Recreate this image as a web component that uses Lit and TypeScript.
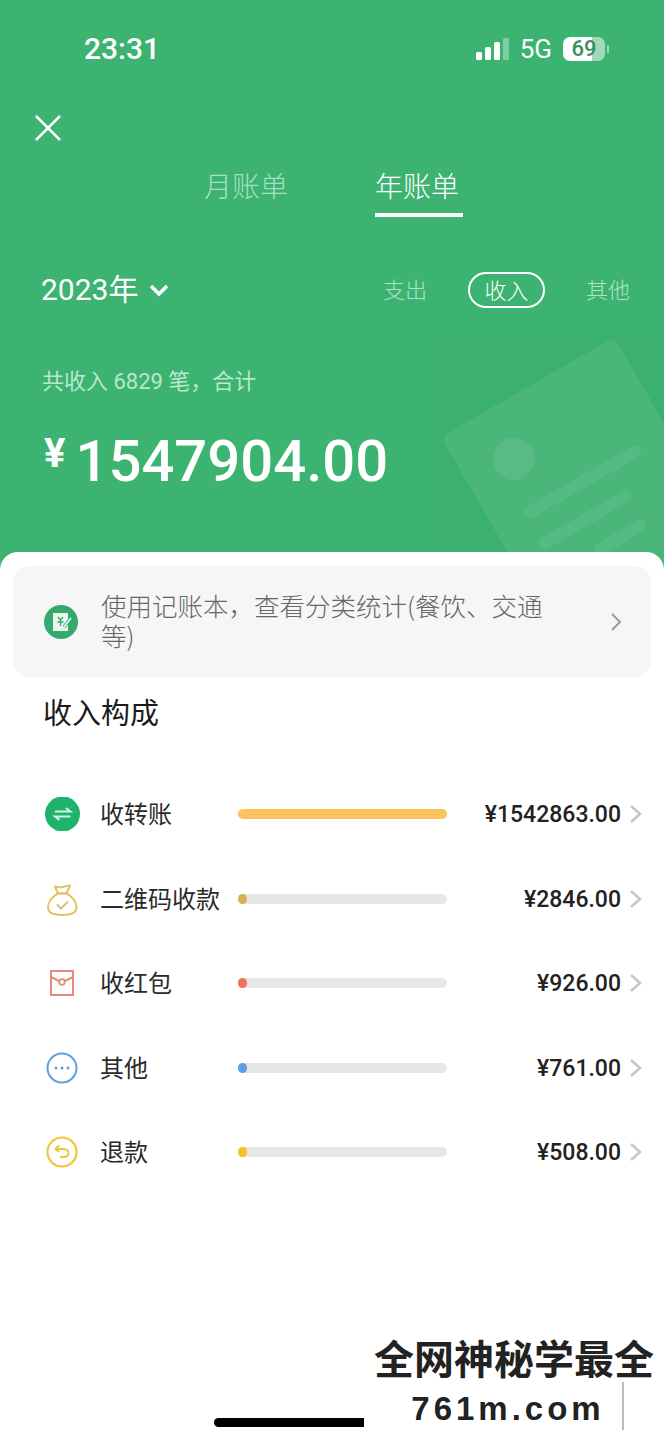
import { LitElement, html, css, svg } from 'lit';
import { customElement } from 'lit/decorators.js';

const rows = [
  { key: 'transfer', label: '收转账', amount: '¥1542863.00', fill: 100, color: '#fcc25e' },
  { key: 'qr', label: '二维码收款', amount: '¥2846.00', fill: 4.5, color: '#d3b24f' },
  { key: 'packet', label: '收红包', amount: '¥926.00', fill: 4.5, color: '#f0705c' },
  { key: 'other', label: '其他', amount: '¥761.00', fill: 4.5, color: '#5a9fe8' },
  { key: 'refund', label: '退款', amount: '¥508.00', fill: 4.5, color: '#f6c31c' },
];

const icons: Record<string, unknown> = {
  transfer: svg`<circle cx="17.500" cy="17" r="17.500" fill="#1db36a"/>
    <path d="M10 14.500h15.500l-4.500-3.500M25.500 19.500H10l4.500 3.500" fill="none" stroke="#d8f3e4" stroke-width="2"/>`,
  qr: svg`<path d="M13 11.500L10 4.500c3 .5 5 1.500 8 .5 2.500-.8 5-1.500 7-1.500l-3.500 8z" fill="none" stroke="#e2c160" stroke-width="2" stroke-linejoin="round"/>
    <path d="M13 11.500C7 14.500 3 20 3 25.500c0 5 4.500 7.500 14.500 7.500s14-2.500 14-7.500c0-5.500-4-11-10-14z" fill="none" stroke="#e2c160" stroke-width="2"/>
    <path d="M12 22.500l4 4 7-7" fill="none" stroke="#d8c07a" stroke-width="2"/>`,
  packet: svg`<rect x="6" y="5" width="22" height="24" fill="none" stroke="#e88a78" stroke-width="2"/>
    <path d="M6 11l11 5.500L28 11" fill="none" stroke="#e88a78" stroke-width="2"/>
    <circle cx="17" cy="16" r="2.800" fill="#fff" stroke="#e88a78" stroke-width="1.700"/>`,
  other: svg`<circle cx="17" cy="17" r="14.500" fill="none" stroke="#619fdc" stroke-width="2"/>
    <circle cx="11" cy="17" r="1.500" fill="#619fdc"/><circle cx="17" cy="17" r="1.500" fill="#619fdc"/><circle cx="23" cy="17" r="1.500" fill="#619fdc"/>`,
  refund: svg`<circle cx="17" cy="17" r="14.500" fill="none" stroke="#eec735" stroke-width="2.200"/>
    <path d="M14 10.500l-3.500 3.500 3.500 3M11 14h8c3 0 4.500 2 4.500 4s-1.500 4-4.500 4h-4" fill="none" stroke="#eec735" stroke-width="2"/>`,
};

const bannerChevron = html`<svg class="chev" viewBox="0 0 12 20"><path d="M2 2l8 8-8 8" fill="none" stroke="#999" stroke-width="2"/></svg>`;
const rowChevron = html`<svg class="chev" viewBox="0 0 13 20"><path d="M2 2l9 8-9 8" fill="none" stroke="#c6c6c6" stroke-width="2.500"/></svg>`;

@customElement('app-root')
export class AppRoot extends LitElement {
  static styles = css`
    :host {
      display: block;
      position: relative;
      width: 664px;
      height: 1440px;
      overflow: hidden;
      background: #fff;
      font-family: 'Noto Sans CJK SC', 'Noto Sans', sans-serif;
      color: #222;
    }
    .hero {
      position: relative;
      height: 570px;
      box-sizing: border-box;
      background: #3cb371;
      color: #fff;
      overflow: hidden;
      padding-top: 29px;
    }
    .deco {
      position: absolute;
      left: 430px;
      top: 330px;
      width: 234px;
      height: 240px;
    }
    .status {
      display: flex;
      justify-content: space-between;
      align-items: center;
      height: 40px;
      padding: 0 59px 0 84px;
    }
    .time {
      font: 500 30px/40px Roboto, sans-serif;
    }
    .status-right {
      display: flex;
      align-items: center;
    }
    .signal {
      width: 33px;
      height: 22px;
      margin-right: 11px;
    }
    .net {
      font: 400 26px/40px Roboto, sans-serif;
      margin-right: 11px;
    }
    .battery {
      position: relative;
      width: 42px;
      height: 24px;
      border-radius: 7px;
      text-align: center;
      background: linear-gradient(90deg, #fff 70%, #a3d8b8 70%);
      color: #3a8f62;
      font: 500 22px/24px Roboto, sans-serif;
    }
    .battery::after {
      content: '';
      position: absolute;
      left: 44px;
      top: 8px;
      width: 2px;
      height: 8px;
      border-radius: 1px;
      background: #a3d8b8;
    }
    .close {
      display: block;
      width: 28px;
      height: 28px;
      margin: 45px 0 0 34px;
    }
    .tabs {
      display: flex;
      gap: 87px;
      margin: 21px 0 0 204px;
      height: 58px;
    }
    .tab {
      position: relative;
      font-size: 28px;
      line-height: 44px;
      font-weight: 300;
      color: #a9dfbf;
    }
    .tab.on {
      color: #fff;
      border-bottom: 4px solid #fff;
      height: 54px;
      line-height: 44px;
      box-sizing: border-box;
      padding-right: 4px;
    }
    .filter {
      display: flex;
      align-items: center;
      height: 40px;
      margin-top: 49px;
      padding: 0 34px 0 41px;
    }
    .year {
      font: 400 30px/40px 'Roboto', 'Noto Sans CJK SC', sans-serif;
    }
    .caret {
      width: 20px;
      height: 14px;
      margin: 0 auto 0 11px;
    }
    .seg {
      font-size: 22px;
      font-weight: 300;
      line-height: 32px;
      padding-bottom: 4px;
      color: #b0e3c4;
    }
    .seg.on {
      box-sizing: border-box;
      width: 77px;
      height: 36px;
      margin: 0 41px;
      padding-bottom: 0;
      line-height: 30px;
      border: 2px solid #fff;
      border-radius: 18px;
      text-align: center;
      color: #fff;
    }
    .sum {
      margin: 56px 0 0 42px;
      font: 400 22px/32px Roboto, 'Noto Sans CJK SC', sans-serif;
      color: #b9e8cb;
    }
    .total {
      display: flex;
      align-items: flex-start;
      margin: 29px 0 0 44px;
      font: 500 58px/68px Roboto, sans-serif;
    }
    .total .cur {
      font-size: 40px;
      line-height: 50px;
      font-weight: 700;
      margin: 2px 10px 0 0;
    }
    .sheet {
      position: relative;
      margin-top: -18px;
      height: 888px;
      border-radius: 18px 18px 0 0;
      background: #fff;
      padding: 14px 13px 0;
      box-sizing: border-box;
    }
    .banner {
      display: flex;
      align-items: center;
      height: 111px;
      box-sizing: border-box;
      padding: 0 29px 0 31px;
      border-radius: 16px;
      background: #f6f6f6;
    }
    .banner-icon {
      width: 34px;
      height: 34px;
      flex: none;
    }
    .banner-text {
      flex: 1;
      margin: 0 52px 0 23px;
      padding-bottom: 3px;
      font-size: 25.500px;
      line-height: 30px;
      font-weight: 300;
      color: #666;
    }
    .banner .chev {
      width: 12px;
      height: 20px;
    }
    h2 {
      margin: 12px 0 0 30px;
      font-size: 29px;
      line-height: 44px;
      font-weight: 400;
      color: #1c1c1c;
    }
    .list {
      margin-top: 39px;
      padding: 0 9px 0 32px;
    }
    .row {
      display: flex;
      align-items: center;
      height: 84.500px;
    }
    .row-icon {
      width: 35px;
      height: 34px;
      flex: none;
    }
    .label {
      width: 138px;
      margin-left: 20px;
      padding-bottom: 3px;
      font-size: 24px;
      font-weight: 400;
      color: #2a2a2a;
      white-space: nowrap;
    }
    .track {
      width: 209px;
      height: 10px;
      flex: none;
      border-radius: 5px;
      background: #e7e7e7;
    }
    .fill {
      height: 100%;
      border-radius: 5px;
    }
    .amount {
      flex: 1;
      text-align: right;
      font: 500 23px/30px Roboto, sans-serif;
      color: #222;
      padding-top: 2px;
    }
    .row .chev {
      width: 13px;
      height: 20px;
      margin-left: 8px;
    }
    .home {
      position: absolute;
      left: 214px;
      bottom: 13px;
      width: 170px;
      height: 9px;
      border-radius: 5px;
      background: #000;
    }
    .mark {
      position: absolute;
      right: 0;
      bottom: 0;
      width: 300px;
      height: 106px;
      background: #fff;
      text-align: center;
      color: #222;
      font-family: 'Liberation Sans', 'Noto Sans CJK SC', sans-serif;
      font-weight: 700;
    }
    .mark-cn {
      font-size: 40px;
      line-height: 50px;
      margin-top: 1px;
      white-space: nowrap;
    }
    .mark-url {
      margin-top: 2px;
      font-size: 33px;
      line-height: 44px;
      letter-spacing: 4px;
      padding-right: 12px;
    }
    .mark-line {
      position: absolute;
      left: 258px;
      top: 48px;
      width: 2px;
      height: 48px;
      background: #bbb;
    }
  `;

  render() {
    return html`
      <div class="hero">
        <svg class="deco" viewBox="0 0 234 240">
          <rect x="10" y="5" width="224" height="235" fill="#000" fill-opacity=".012" />
          <rect x="11" y="107" width="200" height="250" rx="8" transform="rotate(-30 11 107)" fill="#fff" fill-opacity=".08" />
          <circle cx="84" cy="129" r="21" fill="#fff" fill-opacity=".08" />
          <path d="M100 182l105-60M115 213l80-46M170 220l40-25" stroke="#fff" stroke-opacity=".07" stroke-width="12" stroke-linecap="round" />
        </svg>
        <div class="status">
          <span class="time">23:31</span>
          <div class="status-right">
            <svg class="signal" viewBox="0 0 33 22">
              <rect x="0" y="14" width="6" height="8" rx="1.500" fill="#fff" />
              <rect x="9" y="9" width="6" height="13" rx="1.500" fill="#fff" />
              <rect x="18" y="4" width="6" height="18" rx="1.500" fill="#fff" />
              <rect x="27" y="0" width="6" height="22" rx="1.500" fill="#fff" fill-opacity=".35" />
            </svg>
            <span class="net">5G</span>
            <span class="battery">69</span>
          </div>
        </div>
        <svg class="close" viewBox="0 0 28 28"><path d="M2 2l24 24M26 2L2 26" stroke="#fff" stroke-width="2.500" /></svg>
        <div class="tabs">
          <span class="tab">月账单</span>
          <span class="tab on">年账单</span>
        </div>
        <div class="filter">
          <span class="year">2023年</span>
          <svg class="caret" viewBox="0 0 20 14"><path d="M2 3l8 8 8-8" fill="none" stroke="#fff" stroke-width="3.500" /></svg>
          <span class="seg">支出</span>
          <span class="seg on">收入</span>
          <span class="seg">其他</span>
        </div>
        <div class="sum">共收入 6829 笔，合计</div>
        <div class="total"><span class="cur">¥</span><span>1547904.00</span></div>
      </div>
      <div class="sheet">
        <div class="banner">
          <svg class="banner-icon" viewBox="0 0 34 34">
            <circle cx="17" cy="17" r="17" fill="#36a96d" />
            <path d="M9 8h15v18H9z" fill="#e9f6ef" />
            <path d="M14 12l2.500 3 2.500-3M16.500 15v6M13.500 17h6" fill="none" stroke="#36a96d" stroke-width="1.300" />
            <path d="M20 22l7-9" stroke="#36a96d" stroke-width="3.500" />
            <path d="M20 22l7-9" stroke="#e9f6ef" stroke-width="1.800" />
          </svg>
          <div class="banner-text">使用记账本，查看分类统计(餐饮、交通等)</div>
          ${bannerChevron}
        </div>
        <h2>收入构成</h2>
        <div class="list">
          ${rows.map(
            (r) => html`
              <div class="row">
                <svg class="row-icon" viewBox="0 0 35 34">${icons[r.key]}</svg>
                <span class="label">${r.label}</span>
                <div class="track"><div class="fill" style="width:${r.fill}%;background:${r.color}"></div></div>
                <span class="amount">${r.amount}</span>
                ${rowChevron}
              </div>
            `,
          )}
        </div>
      </div>
      <div class="home"></div>
      <div class="mark">
        <div class="mark-cn">全网神秘学最全</div>
        <div class="mark-url">761m.com</div>
        <div class="mark-line"></div>
      </div>
    `;
  }
}
